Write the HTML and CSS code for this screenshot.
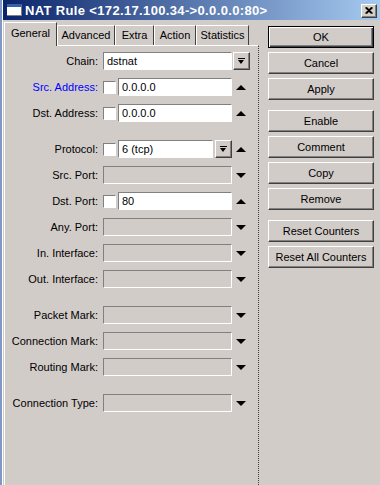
FILE: index.html
```html
<!DOCTYPE html>
<html lang="en">
<head>
  <meta charset="UTF-8" />
  <title>NAT Rule</title>
  <link rel="stylesheet" href="styles.css">
</head>
<body>
  <div class="window">
    <div class="titlebar">
      <span class="app-icon"></span>
      <span class="title">NAT Rule &lt;172.17.100.34-&gt;0.0.0.0:80&gt;</span>
      <span class="close">
        <svg width="8" height="7" viewBox="0 0 8 7"><path d="M0.5 0.5L6.5 6.5M1.5 0.5L7.5 6.5M6.5 0.5L0.5 6.5M7.5 0.5L1.5 6.5" stroke="#000" stroke-width="1.2"/></svg>
      </span>
    </div>

    <div class="main">
      <!-- tabs + form -->
      <div class="tabbox">
        <div class="tabs">
          <div class="tab active t-general">General</div>
          <div class="tab t-advanced">Advanced</div>
          <div class="tab t-extra">Extra</div>
          <div class="tab t-action">Action</div>
          <div class="tab t-stats">Statistics</div>
        </div>
        <div class="panel">
          <div class="row">
            <div class="label">Chain:</div>
            <div class="field"><div class="input">dstnat</div></div>
            <div class="side"><span class="dd-btn"><i class="dd-icon"></i></span></div>
          </div>
          <div class="row">
            <div class="label blue">Src. Address:</div>
            <div class="field"><span class="check"></span><div class="input">0.0.0.0</div></div>
            <div class="side"><span class="up"></span></div>
          </div>
          <div class="row gap">
            <div class="label">Dst. Address:</div>
            <div class="field"><span class="check"></span><div class="input">0.0.0.0</div></div>
            <div class="side"><span class="up"></span></div>
          </div>
          <div class="row">
            <div class="label">Protocol:</div>
            <div class="field"><span class="check"></span><div class="input">6 (tcp)</div><span class="dd-btn"><i class="dd-icon"></i></span></div>
            <div class="side"><span class="up"></span></div>
          </div>
          <div class="row">
            <div class="label">Src. Port:</div>
            <div class="field"><div class="input off"></div></div>
            <div class="side"><span class="down"></span></div>
          </div>
          <div class="row">
            <div class="label">Dst. Port:</div>
            <div class="field"><span class="check"></span><div class="input">80</div></div>
            <div class="side"><span class="up"></span></div>
          </div>
          <div class="row">
            <div class="label">Any. Port:</div>
            <div class="field"><div class="input off"></div></div>
            <div class="side"><span class="down"></span></div>
          </div>
          <div class="row">
            <div class="label">In. Interface:</div>
            <div class="field"><div class="input off"></div></div>
            <div class="side"><span class="down"></span></div>
          </div>
          <div class="row gap">
            <div class="label">Out. Interface:</div>
            <div class="field"><div class="input off"></div></div>
            <div class="side"><span class="down"></span></div>
          </div>
          <div class="row">
            <div class="label">Packet Mark:</div>
            <div class="field"><div class="input off"></div></div>
            <div class="side"><span class="down"></span></div>
          </div>
          <div class="row">
            <div class="label">Connection Mark:</div>
            <div class="field"><div class="input off"></div></div>
            <div class="side"><span class="down"></span></div>
          </div>
          <div class="row gap">
            <div class="label">Routing Mark:</div>
            <div class="field"><div class="input off"></div></div>
            <div class="side"><span class="down"></span></div>
          </div>
          <div class="row">
            <div class="label">Connection Type:</div>
            <div class="field"><div class="input off"></div></div>
            <div class="side"><span class="down"></span></div>
          </div>
        </div>
      </div>

      <!-- buttons -->
      <div class="actions">
        <button class="btn default">OK</button>
        <button class="btn">Cancel</button>
        <button class="btn group-end">Apply</button>
        <button class="btn">Enable</button>
        <button class="btn">Comment</button>
        <button class="btn">Copy</button>
        <button class="btn group-end">Remove</button>
        <button class="btn">Reset Counters</button>
        <button class="btn">Reset All Counters</button>
      </div>
    </div>
  </div>
</body>
</html>
```

FILE: styles.css
```css
* {
  margin: 0;
  padding: 0;
  box-sizing: border-box;
}
body {
  font-family: "Liberation Sans", Arial, sans-serif;
  font-size: 11px;
  color: #000;
  background: #7f98c8;
  width: 380px;
  height: 485px;
  overflow: hidden;
}
.window {
  margin-left: 2px;
  height: 485px;
  background: #d2ccc9;
  border-left: 1px solid #fff;
}

/* title bar */
.titlebar {
  height: 20px;
  display: flex;
  align-items: center;
  padding: 0 3px 0 4px;
  background: linear-gradient(to right, #0a246a, #a6caf0);
  color: #fff;
  font-weight: bold;
  font-size: 13px;
}
.app-icon {
  width: 15px;
  height: 12px;
  margin-right: 3px;
  background: #fff;
  border-top: 3px solid #3a5db0;
  border-bottom: 1px solid #808080;
  border-right: 1px solid #808080;
}
.title {
  flex: 1;
  white-space: nowrap;
  letter-spacing: 0.35px;
}
.close {
  width: 16px;
  height: 14px;
  margin-top: 1px;
  background: #d4d0c8;
  border: 1px solid;
  border-color: #fff #404040 #404040 #fff;
  box-shadow: inset -1px -1px #808080;
  display: flex;
  align-items: center;
  justify-content: center;
}

.main {
  display: flex;
}

/* tabs */
.tabbox {
  width: 255px;
  padding-top: 2px;
  margin-left: 1px;
}
.tabs {
  display: flex;
  align-items: flex-end;
  height: 23px;
  padding-left: 2px;
}
.tab {
  height: 20px;
  line-height: 19px;
  text-align: center;
  border: 1px solid;
  border-bottom: none;
  border-color: #fff #404040 transparent #fff;
}
.tab.active {
  height: 24px;
  line-height: 20px;
  margin: 0 0 -1px -2px;
  background: #d2ccc9;
  position: relative;
  z-index: 1;
}
.t-general { width: 53px; }
.t-advanced { width: 58px; }
.t-extra { width: 39px; }
.t-action { width: 42px; }
.t-stats { width: 53px; }
.panel {
  height: 440px;
  border-top: 1px solid #fff;
  border-left: 1px solid #fff;
  border-right: 1px dotted #404040;
  padding-top: 6px;
}

/* form rows */
.row {
  display: flex;
  align-items: center;
  height: 18px;
  margin-bottom: 8px;
}
.row.gap {
  margin-bottom: 18px;
}
.label {
  width: 93px;
  margin-right: 5px;
  text-align: right;
  white-space: nowrap;
}
.label.blue {
  color: #0000ff;
}
.field {
  width: 129px;
  height: 18px;
  display: flex;
  align-items: center;
  gap: 2px;
}
.side {
  width: 18px;
  height: 18px;
  display: flex;
  align-items: center;
  justify-content: center;
}
.input {
  flex: 1;
  height: 18px;
  line-height: 16px;
  padding-left: 3px;
  background: #fff;
  border: 1px solid;
  border-color: #808080 #fff #fff #808080;
}
.input.off {
  background: transparent;
}
.check {
  width: 13px;
  height: 13px;
  background: #fff;
  border: 1px solid;
  border-color: #808080 #fff #fff #808080;
}
.dd-btn {
  width: 17px;
  height: 18px;
  border: 1px solid;
  border-color: #fff #404040 #404040 #fff;
  box-shadow: inset -1px -1px #808080;
  display: flex;
  align-items: center;
  justify-content: center;
}
.dd-icon {
  width: 7px;
  height: 6px;
  border-top: 1px solid #000;
  position: relative;
}
.dd-icon::after {
  content: "";
  position: absolute;
  left: 0;
  top: 1px;
  border-left: 3.5px solid transparent;
  border-right: 3.5px solid transparent;
  border-top: 4px solid #000;
}
.up {
  width: 0;
  height: 0;
  border-left: 5px solid transparent;
  border-right: 5px solid transparent;
  border-bottom: 5px solid #000;
}
.down {
  width: 0;
  height: 0;
  border-left: 5px solid transparent;
  border-right: 5px solid transparent;
  border-top: 5px solid #000;
}

/* buttons */
.actions {
  width: 106px;
  margin-left: 9px;
  padding-top: 6px;
  display: flex;
  flex-direction: column;
}
.btn {
  height: 22px;
  margin-bottom: 4px;
  font-family: inherit;
  font-size: 11px;
  color: #000;
  background: transparent;
  border: 1px solid;
  border-color: #fff #404040 #404040 #fff;
  box-shadow: inset -1px -1px #808080;
}
.btn.group-end {
  margin-bottom: 10px;
}
.btn.default {
  border-color: #000;
  box-shadow: inset 1px 1px #fff, inset -1px -1px #404040, inset -2px -2px #808080;
}
```
